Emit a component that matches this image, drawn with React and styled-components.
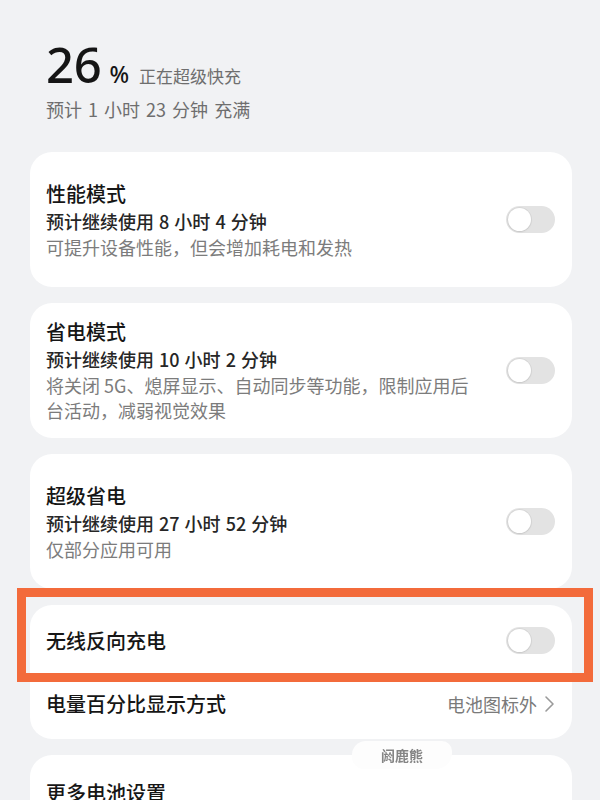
import React from "react";
import styled, { createGlobalStyle } from "styled-components";

const Global = createGlobalStyle`
  html, body { margin: 0; padding: 0; background: #f1f2f4; }
  body { font-family: "Noto Sans CJK SC", "Noto Sans", sans-serif; overflow: hidden; }
`;

const Page = styled.div`
  width: 600px;
  height: 800px;
  overflow: hidden;
  box-sizing: border-box;
  padding: 0 28px 0 30px;
  background: #f1f2f4;
`;

const Header = styled.div`
  padding: 38px 0 0 16px;
  height: 152px;
  box-sizing: border-box;
`;

const Level = styled.div`
  display: flex;
  align-items: baseline;
  color: #151515;
`;

const Big = styled.span`
  font-family: "Noto Sans", Roboto, sans-serif;
  font-size: 49px;
  font-weight: 500;
  line-height: 52px;
  letter-spacing: -0.3px;
`;

const Pct = styled.span`
  font-family: "Noto Sans", Roboto, sans-serif;
  font-size: 23px;
  font-weight: 500;
  margin-left: 8px;
`;

const Status = styled.span`
  font-size: 17px;
  color: #6e6e6e;
  margin-left: 10px;
`;

const Eta = styled.div`
  margin-top: 6px;
  font-size: 18px;
  color: #6e6e6e;
  word-spacing: 2px;
`;

const Stack = styled.div`
  display: flex;
  flex-direction: column;
  gap: 16px;
`;

const Card = styled.div`
  position: relative;
  background: #fff;
  border-radius: 22px;
  box-sizing: border-box;
`;

const ModeCard = styled(Card)`
  display: flex;
  align-items: center;
  justify-content: space-between;
  min-height: 135px;
  padding: 15px 17px 15px 16px;
`;

const ListCard = styled(Card)`
  padding: ${(p) => p.$pad || "4px"} 17px 4px 16px;
`;

const TextCol = styled.div`
  display: flex;
  flex-direction: column;
  max-width: 430px;
`;

const Title = styled.div`
  font-size: 20px;
  font-weight: 500;
  line-height: 28px;
  color: #161616;
`;

const Estimate = styled.div`
  font-size: 18px;
  font-weight: 500;
  line-height: 27px;
  color: #262626;
  word-spacing: 1px;
`;

const Desc = styled.div`
  font-size: 18px;
  line-height: 25px;
  color: #7c7c7c;
`;

const Track = styled.div`
  flex: none;
  width: 49px;
  height: 27px;
  border-radius: 14px;
  background: #e3e3e3;
  display: flex;
  align-items: center;
  padding: 0 2px;
  box-sizing: border-box;
`;

const Knob = styled.div`
  width: 23px;
  height: 23px;
  border-radius: 50%;
  background: #fff;
  box-shadow: 0 0 0 1px rgba(0, 0, 0, 0.05), 0 1px 2px rgba(0, 0, 0, 0.08);
`;

const Row = styled.div`
  height: 63px;
  display: flex;
  align-items: center;
  justify-content: space-between;
`;

const RowLabel = styled.div`
  font-size: 20px;
  font-weight: 500;
  color: #161616;
`;

const Value = styled.div`
  display: flex;
  align-items: center;
  gap: 7px;
  font-size: 18px;
  color: #7a7a7a;
`;

const Highlight = styled.div`
  position: absolute;
  top: -17px;
  left: -13px;
  right: -21px;
  height: 94px;
  border: 9px solid #f36b3b;
  box-sizing: border-box;
  pointer-events: none;
`;

const Watermark = styled.div`
  position: absolute;
  left: 322px;
  bottom: -30px;
  width: 100px;
  height: 28px;
  background: #fdfdfd;
  border-radius: 14px 10px 16px 12px;
  display: flex;
  align-items: center;
  justify-content: center;
  font-size: 14px;
  font-weight: 700;
  color: #858585;
  filter: blur(0.5px);
  z-index: 2;
`;

const Switch = () => (
  <Track>
    <Knob />
  </Track>
);

const Chevron = () => (
  <svg width="11" height="18" viewBox="0 0 11 18" fill="none">
    <path d="M2 2l7 7-7 7" stroke="#9a9a9a" strokeWidth="1.6" strokeLinecap="round" strokeLinejoin="round" />
  </svg>
);

const modes = [
  {
    title: "性能模式",
    est: "预计继续使用 8 小时 4 分钟",
    desc: "可提升设备性能，但会增加耗电和发热",
  },
  {
    title: "省电模式",
    est: "预计继续使用 10 小时 2 分钟",
    desc: "将关闭 5G、熄屏显示、自动同步等功能，限制应用后台活动，减弱视觉效果",
  },
  {
    title: "超级省电",
    est: "预计继续使用 27 小时 52 分钟",
    desc: "仅部分应用可用",
  },
];

export default function App() {
  return (
    <Page>
      <Global />
      <Header>
        <Level>
          <Big>26</Big>
          <Pct>%</Pct>
          <Status>正在超级快充</Status>
        </Level>
        <Eta>预计 1 小时 23 分钟 充满</Eta>
      </Header>
      <Stack>
        {modes.map((m) => (
          <ModeCard key={m.title}>
            <TextCol>
              <Title>{m.title}</Title>
              <Estimate>{m.est}</Estimate>
              <Desc>{m.desc}</Desc>
            </TextCol>
            <Switch />
          </ModeCard>
        ))}
        <ListCard>
          <Row>
            <RowLabel>无线反向充电</RowLabel>
            <Switch />
          </Row>
          <Row>
            <RowLabel>电量百分比显示方式</RowLabel>
            <Value>
              电池图标外
              <Chevron />
            </Value>
          </Row>
          <Highlight />
          <Watermark>阏鹿熊</Watermark>
        </ListCard>
        <ListCard $pad="6px">
          <Row>
            <RowLabel>更多电池设置</RowLabel>
          </Row>
        </ListCard>
      </Stack>
    </Page>
  );
}
